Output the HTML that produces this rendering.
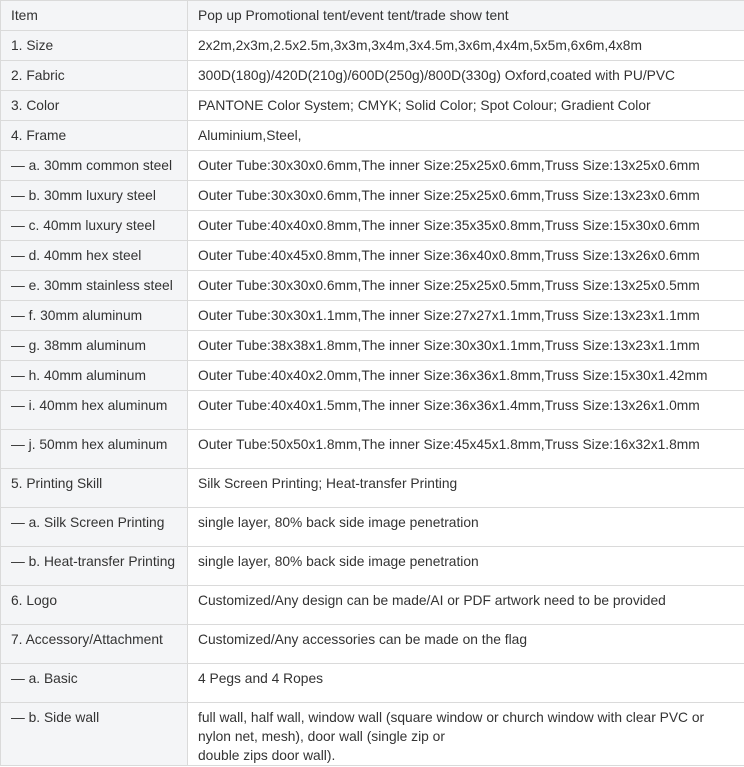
<!DOCTYPE html>
<html><head><meta charset="utf-8"><style>
html,body{margin:0;padding:0;background:#fff;}
body{width:744px;height:767px;overflow:hidden;}
table{border-collapse:collapse;width:745px;font-family:"Liberation Sans",sans-serif;font-size:13.8px;color:#333;table-layout:fixed;}
td{border:1px solid #dadada;vertical-align:top;padding:5px 4px 0 10px;line-height:20px;box-sizing:border-box;white-space:nowrap;}
td:first-child{background:#f4f5f7;width:187px;}
tr.h td{background:#f4f5f7;}
tr{height:30px;}
tr.t{height:39px;}
tr.s td{line-height:19px;padding-top:5px;white-space:normal;}
</style></head><body>
<table>
<tr class="h"><td>Item</td><td>Pop up Promotional tent/event tent/trade show tent</td></tr>
<tr><td>1. Size</td><td>2x2m,2x3m,2.5x2.5m,3x3m,3x4m,3x4.5m,3x6m,4x4m,5x5m,6x6m,4x8m</td></tr>
<tr><td>2. Fabric</td><td>300D(180g)/420D(210g)/600D(250g)/800D(330g) Oxford,coated with PU/PVC</td></tr>
<tr><td>3. Color</td><td>PANTONE Color System; CMYK; Solid Color; Spot Colour; Gradient Color</td></tr>
<tr><td>4. Frame</td><td>Aluminium,Steel,</td></tr>
<tr><td>— a. 30mm common steel</td><td>Outer Tube:30x30x0.6mm,The inner Size:25x25x0.6mm,Truss Size:13x25x0.6mm</td></tr>
<tr><td>— b. 30mm luxury steel</td><td>Outer Tube:30x30x0.6mm,The inner Size:25x25x0.6mm,Truss Size:13x23x0.6mm</td></tr>
<tr><td>— c. 40mm luxury steel</td><td>Outer Tube:40x40x0.8mm,The inner Size:35x35x0.8mm,Truss Size:15x30x0.6mm</td></tr>
<tr><td>— d. 40mm hex steel</td><td>Outer Tube:40x45x0.8mm,The inner Size:36x40x0.8mm,Truss Size:13x26x0.6mm</td></tr>
<tr><td>— e. 30mm stainless steel</td><td>Outer Tube:30x30x0.6mm,The inner Size:25x25x0.5mm,Truss Size:13x25x0.5mm</td></tr>
<tr><td>— f. 30mm aluminum</td><td>Outer Tube:30x30x1.1mm,The inner Size:27x27x1.1mm,Truss Size:13x23x1.1mm</td></tr>
<tr><td>— g. 38mm aluminum</td><td>Outer Tube:38x38x1.8mm,The inner Size:30x30x1.1mm,Truss Size:13x23x1.1mm</td></tr>
<tr><td>— h. 40mm aluminum</td><td>Outer Tube:40x40x2.0mm,The inner Size:36x36x1.8mm,Truss Size:15x30x1.42mm</td></tr>
<tr class="t"><td>— i. 40mm hex aluminum</td><td>Outer Tube:40x40x1.5mm,The inner Size:36x36x1.4mm,Truss Size:13x26x1.0mm</td></tr>
<tr class="t"><td>— j. 50mm hex aluminum</td><td>Outer Tube:50x50x1.8mm,The inner Size:45x45x1.8mm,Truss Size:16x32x1.8mm</td></tr>
<tr class="t"><td>5. Printing Skill</td><td>Silk Screen Printing; Heat-transfer Printing</td></tr>
<tr class="t"><td>— a. Silk Screen Printing</td><td>single layer, 80% back side image penetration</td></tr>
<tr class="t"><td>— b. Heat-transfer Printing</td><td>single layer, 80% back side image penetration</td></tr>
<tr class="t"><td>6. Logo</td><td>Customized/Any design can be made/AI or PDF artwork need to be provided</td></tr>
<tr class="t"><td>7. Accessory/Attachment</td><td>Customized/Any accessories can be made on the flag</td></tr>
<tr class="t"><td>— a. Basic</td><td>4 Pegs and 4 Ropes</td></tr>
<tr class="s"><td>— b. Side wall</td><td>full wall, half wall, window wall (square window or church window with clear PVC or<br>nylon net, mesh), door wall (single zip or<br>double zips door wall).</td></tr>
</table>
</body></html>
